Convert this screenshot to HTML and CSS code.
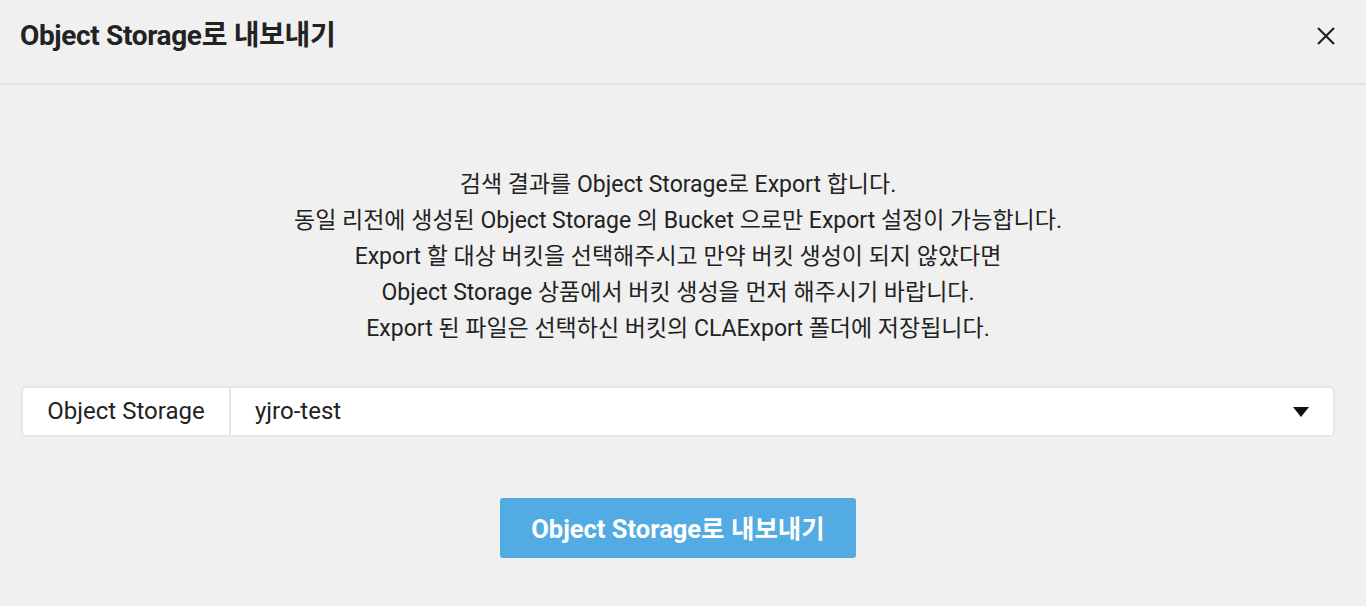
FILE: index.html
```html
<!DOCTYPE html>
<html lang="ko">
<head>
<meta charset="utf-8">
<link rel="stylesheet" href="styles.css">
</head>
<body>
<div class="modal">
  <div class="header">
    <h1 class="title">Object Storage로 내보내기</h1>
    <button class="close" aria-label="close">
      <svg width="18" height="18" viewBox="0 0 18 18"><path d="M1 1 L17 17 M17 1 L1 17" stroke="#222" stroke-width="2.2" fill="none"/></svg>
    </button>
  </div>
  <div class="body">
    <div class="desc">
      <p>검색 결과를 Object Storage로 Export 합니다.</p>
      <p>동일 리전에 생성된 Object Storage 의 Bucket 으로만 Export 설정이 가능합니다.</p>
      <p>Export 할 대상 버킷을 선택해주시고 만약 버킷 생성이 되지 않았다면</p>
      <p>Object Storage 상품에서 버킷 생성을 먼저 해주시기 바랍니다.</p>
      <p>Export 된 파일은 선택하신 버킷의 CLAExport 폴더에 저장됩니다.</p>
    </div>
    <div class="field">
      <div class="label">Object Storage</div>
      <div class="select">
        <span>yjro-test</span>
        <svg class="caret" width="16" height="10" viewBox="0 0 16 10"><path d="M0 0 H16 L8 10 Z" fill="#111"/></svg>
      </div>
    </div>
    <div class="actions">
      <button class="primary">Object Storage로 내보내기</button>
    </div>
  </div>
</div>
</body>
</html>
```

FILE: styles.css
```css
* { box-sizing: border-box; }
html, body { margin: 0; padding: 0; }
body {
  background: #f0f0f0;
  font-family: Roboto, "Noto Sans CJK KR", sans-serif;
  color: #222;
  width: 1366px;
  height: 606px;
  overflow: hidden;
}
.header {
  height: 85px;
  border-bottom: 2px solid #e2e2e2;
  display: flex;
  align-items: center;
  justify-content: space-between;
  padding: 0 31px 12px 20px;
}
.title {
  margin: 0;
  font-size: 28px;
  line-height: 36px;
  font-weight: 700;
  color: #222;
  letter-spacing: -0.35px;
}
.close {
  border: 0;
  background: none;
  padding: 0;
  display: flex;
  cursor: pointer;
}
.body {
  padding: 82px 31px 0 21px;
}
.desc {
  text-align: center;
  font-size: 23px;
  line-height: 36px;
  color: #222;
}
.desc p { margin: 0; }
.field {
  margin-top: 39px;
  display: flex;
  height: 51px;
  border: 2px solid #e6e6e6;
  border-radius: 5px;
  background: #fff;
  font-size: 24px;
}
.label {
  width: 208px;
  border-right: 2px solid #e6e6e6;
  display: flex;
  align-items: center;
  justify-content: center;
  padding-bottom: 2px;
}
.select {
  flex: 1;
  display: flex;
  align-items: center;
  justify-content: space-between;
  padding: 0 24px 2px 24px;
}
.caret { margin-top: 2px; }
.actions {
  display: flex;
  justify-content: center;
  padding-top: 61px;
}
.primary {
  width: 356px;
  height: 60px;
  border: 0;
  border-radius: 3px;
  background: #53abe3;
  color: #fff;
  font-family: Roboto, "Noto Sans CJK KR", sans-serif;
  font-size: 25.5px;
  font-weight: 700;
  padding-bottom: 4px;
}
```
